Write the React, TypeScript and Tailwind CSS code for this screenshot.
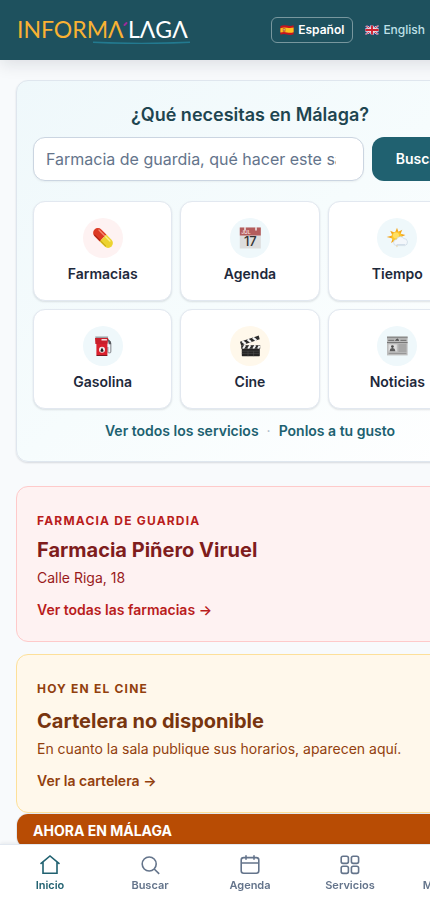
import type { ReactNode } from "react";

function PillIcon() {
  return (
    <svg width="20" height="20" viewBox="0 0 20 20">
      <g transform="rotate(45 10 10)">
        <path d="M10 5.2H2.8a4.8 4.8 0 0 0 0 9.6H10z" fill="#dc3a24" />
        <path d="M10 5.2h7.2a4.8 4.8 0 0 1 0 9.6H10z" fill="#ecd32f" />
        <path d="M1.5 7.2h8" stroke="#f58a70" strokeWidth="1.3" strokeLinecap="round" />
        <path d="M11 7.2h6" stroke="#fbf08c" strokeWidth="1.3" strokeLinecap="round" />
        <path d="M2 13.8h7.6" stroke="#a92314" strokeWidth="1" strokeLinecap="round" />
        <path d="M10.5 13.8h7" stroke="#c4a418" strokeWidth="1" strokeLinecap="round" />
      </g>
    </svg>
  );
}

function CalendarDayIcon() {
  return (
    <svg width="20" height="20" viewBox="0 0 20 20" overflow="visible">
      <rect x="-0.2" y="-0.5" width="21" height="21" fill="#dddddd" />
      <rect x="-0.2" y="-0.5" width="21" height="8" fill="#b45c5c" />
      <path d="M5 -0.5v2.5M16 -0.5v2.5" stroke="#f1e4e4" strokeWidth="1.6" strokeLinecap="round" />
      <text x="1.2" y="6.4" fontFamily="Inter, sans-serif" fontSize="5" fontWeight="600" fill="#f4dede">
        JUL
      </text>
      <text x="10.3" y="18" textAnchor="middle" fontFamily="Inter, sans-serif" fontSize="13" fontWeight="500" fill="#333333">
        17
      </text>
    </svg>
  );
}

function SunCloudIcon() {
  return (
    <svg width="20" height="20" viewBox="0 0 20 20" overflow="visible">
      <path
        d="M10 -0.2l1.4 4 3.9-2-1.7 4 4.8 1.2-4.4 2 1.4 5.2-4-1.6-1.4 7-1.6-7-4.4 2.4 1.8-4.6-6.2-1.4 5.8-1.6-2.2-4.6 4.8 2z"
        fill="#f3a51c"
      />
      <circle cx="9.8" cy="8.8" r="5.3" fill="#fcc62d" />
      <circle cx="9" cy="7.6" r="3" fill="#ffdf62" />
      <path
        d="M9.8 17.6a3.1 3.1 0 0 1-.2-6.2 4 4 0 0 1 7.2-.9 3.6 3.6 0 0 1 .9 7.1z"
        fill="#f3f7fb"
        stroke="#c3d2df"
        strokeWidth="0.6"
      />
      <path d="M10 16.6h7.6" stroke="#cfdbe7" strokeWidth="1" strokeLinecap="round" />
    </svg>
  );
}

function FuelPumpIcon() {
  return (
    <svg width="20" height="20" viewBox="0 0 20 20" overflow="visible">
      <path d="M15.2 4l2.6 3.2v8.2a1.5 1.5 0 0 1-3 0V11" fill="none" stroke="#9b9ea3" strokeWidth="1.3" />
      <path d="M14.6 2.4l3.4 3.4v2.4h-2.2z" fill="#55585d" />
      <path d="M2.2.4h13l-.6 2.8H2.8z" fill="#9b9ea3" />
      <path d="M2 2h13.2l-.6 6H2.4z" fill="#c91f2b" />
      <path d="M8.5 3.8h5.4" stroke="#ffffff" strokeWidth="1.3" />
      <rect x="3.4" y="8" width="11" height="11" fill="#d9202d" />
      <path d="M3.4 19h11v1h-11z" fill="#7a1820" />
      <circle cx="9" cy="13.7" r="3" fill="#f6eeee" />
      <path d="M9 11.5l1.3 2.4a1.4 1.4 0 1 1-2.6 0z" fill="#1c1c1c" />
    </svg>
  );
}

function ClapperIcon() {
  return (
    <svg width="20" height="20" viewBox="0 0 20 20" overflow="visible">
      <path d="M0 5.8L18.7-.4l1 3.6L1.2 9.4z" fill="#2b2b2b" />
      <path d="M2.3 5.1l3.4 2.8M7.6 3.4L11 6.1M12.9 1.6l3.4 2.7" stroke="#f4f4f4" strokeWidth="2.2" />
      <rect x="1.2" y="9.2" width="19" height="3.6" fill="#2b2b2b" />
      <path d="M5.2 9.2L3 12.8M10.3 9.2l-2.2 3.6M15.4 9.2l-2.2 3.6M19.6 9.8l-1.6 3" stroke="#f4f4f4" strokeWidth="2" />
      <rect x="1.8" y="12.8" width="18" height="7.4" rx="0.6" fill="#242424" />
      <path d="M1.8 15.2h18M1.8 17.4h18M8 15.2v5M13.6 15.2v5" stroke="#555555" strokeWidth="0.5" />
    </svg>
  );
}

function NewspaperIcon() {
  return (
    <svg width="20" height="20" viewBox="0 0 20 20" overflow="visible">
      <rect x="0" y="0.6" width="20.6" height="18.8" fill="#bdbdbd" />
      <path d="M0 .6h20.6v1.6H0z" fill="#8b8b8b" />
      <path d="M1.2 4.3h6M13.4 4.3h6" stroke="#777777" strokeWidth="1.2" />
      <path d="M8.4 4.4l1.8-1.6 1.8 1.6z" fill="#4a4a4a" stroke="#4a4a4a" strokeWidth="0.6" />
      <path d="M0 6.6h20.6" stroke="#707070" strokeWidth="1" />
      <rect x="1.6" y="8.4" width="8.2" height="7" fill="#dedede" />
      <circle cx="5.4" cy="10.6" r="1.4" fill="#4c4c4c" />
      <path d="M2.6 15.2c.4-2.6 1.6-3.2 2.8-3.2s2.6.6 3 3.2z" fill="#5b5b5b" />
      <path d="M11.4 9h8M11.4 11h8M11.4 13h8M11.4 15h8M1.6 17.4h17.8" stroke="#8d8d8d" strokeWidth="0.9" />
    </svg>
  );
}

function SpainFlag() {
  return (
    <svg width="14" height="12" viewBox="0 0 14 12">
      <path d="M.4 1.9Q3.6.6 7 1.5t6.6-.2v9Q10.400 11.500 7 10.500t-6.600.3z" fill="#c8141e" />
      <path d="M.4 4.200Q3.600 2.900 7 3.700t6.600-.1v4.600Q10.400 9.300 7 8.400t-6.600.2z" fill="#fbc31e" />
      <path d="M2.800 4.300h2.600v3.400H2.800z" fill="#b4552a" />
      <path d="M3.500 5h1.200v1.600H3.500z" fill="#e9c9a0" />
    </svg>
  );
}

function UnitedKingdomFlag() {
  return (
    <svg width="14" height="12" viewBox="0 0 14 12">
      <clipPath id="uk-cloth">
        <path d="M.4 1.900Q3.600.600 7 1.500t6.600-.200v9Q10.400 11.500 7 10.500t-6.600.300z" />
      </clipPath>
      <g clipPath="url(#uk-cloth)">
        <path d="M0 0h14v12H0z" fill="#293b82" />
        <path d="M0 1l14 10M14 1L0 11" stroke="#e8e8f0" strokeWidth="2.200" />
        <path d="M0 1l14 10M14 1L0 11" stroke="#d0263a" strokeWidth="0.900" />
        <path d="M7 0v12M0 6h14" stroke="#eeeef4" strokeWidth="3.400" />
        <path d="M7 0v12M0 6h14" stroke="#d0202f" strokeWidth="1.900" />
      </g>
    </svg>
  );
}

const services = [
  { label: "Farmacias", icon: <PillIcon />, tint: "bg-[#fef2f2]" },
  { label: "Agenda", icon: <CalendarDayIcon />, tint: "bg-[#eff8fb]" },
  { label: "Tiempo", icon: <SunCloudIcon />, tint: "bg-[#eff8fb]" },
  { label: "Gasolina", icon: <FuelPumpIcon />, tint: "bg-[#eff8fb]" },
  { label: "Cine", icon: <ClapperIcon />, tint: "bg-[#fff8eb]" },
  { label: "Noticias", icon: <NewspaperIcon />, tint: "bg-[#eff8fb]" },
];

function Logo() {
  return (
    <a href="#inicio" aria-label="Informálaga" className="block">
      <svg width="176" height="28" viewBox="0 0 176 28" fill="none">
        <text x="1" y="22" fontFamily="Lato, sans-serif" fontSize="23" fill="#f9b233">
          INFORMΛ
        </text>
        <text x="112" y="22" fontFamily="Lato, sans-serif" fontSize="23" fill="#ffffff">
          LΛGΛ
        </text>
        <path d="M108.500 9l2-2" stroke="#9c2a9c" strokeWidth="2" strokeLinecap="round" />
        <path d="M77 26.300Q125 28.500 174 26.300" stroke="#237a90" strokeWidth="1.400" />
      </svg>
    </a>
  );
}

function Header() {
  return (
    <header className="flex h-[60px] items-center justify-between bg-[#1e515e] px-4 shadow-[0_4px_16px_rgba(15,23,42,0.12)]">
      <Logo />
      <div className="flex items-center gap-1 text-xs">
        <button type="button" className="flex h-[26px] items-center gap-1 rounded-md border border-[#78979e] px-2 font-semibold text-white">
          <SpainFlag />
          <span>Español</span>
        </button>
        <button type="button" className="flex h-[26px] items-center gap-1 px-2 font-medium text-[#bfe0e8]">
          <UnitedKingdomFlag />
          <span>English</span>
        </button>
        <button type="button" aria-label="Modo oscuro" className="h-9 w-[47px]" />
      </div>
    </header>
  );
}

function SearchPanel() {
  return (
    <section className="rounded-xl border border-[#dfe6ee] bg-linear-to-br from-[#eff8fb] via-[#f6fcfd] to-white px-4 py-5 shadow-[0_1px_2px_rgba(15,23,42,0.14)]">
      <h1 className="text-center text-lg leading-7 font-semibold text-[#1e4550]">¿Qué necesitas en Málaga?</h1>
      <form className="mt-2 flex gap-2">
        <input
          type="search"
          aria-label="Buscar en Málaga"
          placeholder="Farmacia de guardia, qué hacer este sábado..."
          className="h-11 min-w-0 flex-1 rounded-xl border border-[#cbd5e1] bg-white px-3 text-base shadow-xs placeholder:text-[#64748b]"
        />
        <button type="button" className="w-[95px] rounded-xl bg-[#206170] text-sm font-semibold text-white">
          Buscar
        </button>
      </form>
      <div className="mt-5 grid grid-cols-3 gap-2">
        {services.map((service) => (
          <a
            key={service.label}
            href="#servicio"
            className="flex flex-col items-center gap-1.5 rounded-xl border border-[#e2e8f0] bg-white py-4 shadow-[0_1px_2px_rgba(15,23,42,0.12)]"
          >
            <span className={`flex size-10 items-center justify-center rounded-full ${service.tint}`}>{service.icon}</span>
            <span className="text-sm font-semibold text-[#1e293b]">{service.label}</span>
          </a>
        ))}
      </div>
      <p className="mt-3 flex justify-center gap-2 text-sm font-semibold text-[#206170]">
        <a href="#servicios">Ver todos los servicios</a>
        <span className="font-normal text-[#a9b8c6]">·</span>
        <a href="#gusto">Ponlos a tu gusto</a>
      </p>
    </section>
  );
}

type NoticeProps = {
  tone: string;
  linkTone: string;
  label: string;
  action: string;
  children: ReactNode;
};

function Notice({ tone, linkTone, label, action, children }: NoticeProps) {
  return (
    <article className={`rounded-xl border px-5 pt-[26px] pb-[21px] ${tone}`}>
      <p className={`text-xs font-bold tracking-widest uppercase ${linkTone}`}>{label}</p>
      {children}
      <a href="#detalle" className={`mt-3 block text-sm font-semibold ${linkTone}`}>
        {action}
      </a>
    </article>
  );
}

function NavIcon({ children }: { children: ReactNode }) {
  return (
    <svg width="22" height="22" viewBox="0 0 22 22" fill="none" stroke="currentColor" strokeWidth="1.600">
      {children}
    </svg>
  );
}

const navItems = [
  {
    label: "Inicio",
    icon: (
      <NavIcon>
        <path d="M1.500 10.800L11 3l9.500 7.800M4 9v11.200h14V9" />
      </NavIcon>
    ),
  },
  {
    label: "Buscar",
    icon: (
      <NavIcon>
        <circle cx="10.200" cy="11" r="7" />
        <path d="M15.200 16l5 4.800" />
      </NavIcon>
    ),
  },
  {
    label: "Agenda",
    icon: (
      <NavIcon>
        <rect x="2.200" y="4.600" width="17.600" height="15.600" rx="2.500" />
        <path d="M2.200 10h17.600M7 2.200v4.600M15 2.200v4.600" />
      </NavIcon>
    ),
  },
  {
    label: "Servicios",
    icon: (
      <NavIcon>
        <rect x="2.200" y="3.200" width="7.200" height="7.200" rx="1.800" />
        <rect x="12.400" y="3.200" width="7.200" height="7.200" rx="1.800" />
        <rect x="2.200" y="13.200" width="7.200" height="7.200" rx="1.800" />
        <rect x="12.400" y="13.200" width="7.200" height="7.200" rx="1.800" />
      </NavIcon>
    ),
  },
  {
    label: "Mi Málaga",
    icon: (
      <NavIcon>
        <circle cx="11" cy="7.500" r="4" />
        <path d="M3.500 20a7.500 7.500 0 0 1 15 0" />
      </NavIcon>
    ),
  },
];

function BottomNav() {
  return (
    <nav className="fixed bottom-0 left-0 grid h-14 w-full min-w-[500px] grid-cols-5 border-t border-[#e2e8f0] bg-white shadow-[0_-1px_4px_rgba(15,23,42,0.08)]">
      {navItems.map((item) => (
        <a
          key={item.label}
          href="#nav"
          className="flex flex-col items-center gap-0.5 pt-2 text-[11px] leading-4 font-semibold text-[#64748b] first:text-[#206170]"
        >
          {item.icon}
          <span>{item.label}</span>
        </a>
      ))}
    </nav>
  );
}

export default function App() {
  return (
    <div className="min-h-screen overflow-x-clip bg-[#f8fafc] font-['Inter',sans-serif]">
      <div className="min-w-[500px]">
        <Header />
        <main className="px-4 pt-5">
          <SearchPanel />
          <div className="mt-6 flex flex-col gap-3">
            <Notice
              tone="border-[#fecaca] bg-[#fef2f2]"
              linkTone="text-[#b91c1c]"
              label="Farmacia de guardia"
              action="Ver todas las farmacias →"
            >
              <h2 className="mt-2 text-xl leading-[27px] font-bold text-[#7f1d1d]">Farmacia Piñero Viruel</h2>
              <p className="mt-1 text-sm text-[#991b1b]">Calle Riga, 18</p>
            </Notice>
            <Notice
              tone="border-[#fde09a] bg-[#fff8eb]"
              linkTone="text-[#92400e]"
              label="Hoy en el cine"
              action="Ver la cartelera →"
            >
              <h2 className="mt-[11px] text-xl leading-[27px] font-bold text-[#78350f]">Cartelera no disponible</h2>
              <p className="mt-1 text-sm text-[#92400e]">En cuanto la sala publique sus horarios, aparecen aquí.</p>
            </Notice>
          </div>
          <section className="overflow-hidden rounded-xl border border-[#e2e8f0] bg-white">
            <h2 className="bg-[#b84c04] px-4 py-[7px] text-sm font-bold text-white uppercase">Ahora en Málaga</h2>
          </section>
        </main>
        <BottomNav />
      </div>
    </div>
  );
}
